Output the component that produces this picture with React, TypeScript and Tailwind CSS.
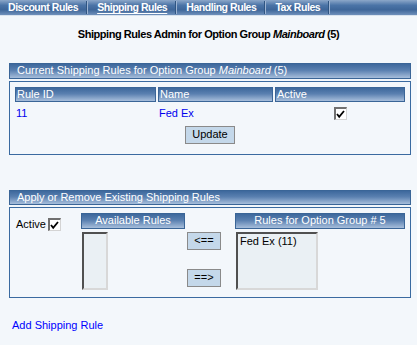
import React from "react";

const font = { fontFamily: '"Liberation Sans", Arial, sans-serif' };

function Bar({ children, className = "" }: { children?: React.ReactNode; className?: string }) {
  return (
    <div
      className={`border border-[#3a6597] bg-[linear-gradient(to_bottom,#3d689c_0%,#5a80b0_45%,#a7bedb_100%)] text-white text-[11px] leading-none flex items-center ${className}`}
    >
      {children}
    </div>
  );
}

function Check() {
  return (
    <div className="w-[13px] h-[13px] bg-white border-t-2 border-l-2 border-t-[#707070] border-l-[#707070] border-r border-b border-r-[#d4d4d4] border-b-[#d4d4d4] flex items-center justify-center">
      <svg width="9" height="9" viewBox="0 0 9 9">
        <path d="M1 4 L3.2 6.8 L8 1" stroke="#000" strokeWidth="1.8" fill="none" />
      </svg>
    </div>
  );
}

function Btn({ children, className = "" }: { children: React.ReactNode; className?: string }) {
  return (
    <div
      className={`bg-[#c4d8ea] border border-[#8a8a8a] text-black text-[11px] flex items-center justify-center ${className}`}
    >
      {children}
    </div>
  );
}

export default function App() {
  const tabs = ["Discount Rules", "Shipping Rules", "Handling Rules", "Tax Rules"];
  return (
    <div className="w-[417px] h-[345px] bg-[#f3f7fb] overflow-hidden" style={font}>
      {/* tab bar */}
      <div className="h-[16px] bg-[linear-gradient(to_bottom,#8ca7c9_0%,#4b74a7_35%,#3e6699_65%,#6f90bb_100%)] border-b border-b-[#d9e3ee] flex items-center pl-[8px]">
        {tabs.map((t, i) => (
          <div key={t} className="flex items-center h-full">
            <span
              className={`text-white font-bold text-[10.5px] leading-none tracking-[-0.45px] ${i === 1 ? "underline underline-offset-2" : ""}`}
            >
              {t}
            </span>
            <div className="ml-[8px] mr-[9px] h-[13px] w-[2px] border-l border-l-[#2f5582] border-r border-r-[#9db4d3]" />
          </div>
        ))}
      </div>

      {/* title */}
      <div className="text-center font-bold text-[11px] text-black mt-[10px] tracking-[-0.45px]">
        Shipping Rules Admin for Option Group <i>Mainboard</i> (5)
      </div>

      {/* section 1 */}
      <div className="ml-[9px] w-[402px] mt-[20px]">
        <Bar className="h-[16px] pl-[7px]">
          Current Shipping Rules for Option Group&nbsp;<i>Mainboard</i>&nbsp;(5)
        </Bar>
        <div className="mt-[2px] border border-[#3a6aa0] h-[74px] px-[5px] pt-[5px]">
          <div className="flex gap-[2px]">
            <Bar className="w-[141px] h-[15px] pl-[1px]">Rule ID</Bar>
            <Bar className="w-[115px] h-[15px] pl-[1px]">Name</Bar>
            <Bar className="w-[130px] h-[15px] pl-[1px]">Active</Bar>
          </div>
          <div className="flex items-center h-[24px] text-[11px] text-[#0000ee]">
            <span className="w-[143px] pl-[1px]">11</span>
            <span className="w-[117px] pl-[1px]">Fed Ex</span>
            <span className="w-[130px] flex justify-center">
              <Check />
            </span>
          </div>
          <div className="flex justify-center">
            <Btn className="w-[50px] h-[18px]">Update</Btn>
          </div>
        </div>
      </div>

      {/* section 2 */}
      <div className="ml-[9px] w-[402px] mt-[35px]">
        <Bar className="h-[15px] pl-[7px]">Apply or Remove Existing Shipping Rules</Bar>
        <div className="mt-[2px] border border-[#3a6aa0] h-[91px] flex pt-[5px]">
          <div className="flex items-center gap-[2px] w-[71px] pl-[6px] h-[24px] text-[11px] text-black">
            <span>Active</span>
            <Check />
          </div>
          <div className="w-[104px] flex flex-col">
            <Bar className="h-[16px] justify-center">Available Rules</Bar>
            <div className="ml-[1px] mt-[3px] w-[26px] h-[58px] bg-[#eaf0f4] border-2 border-t-[#505050] border-l-[#505050] border-r-[#d8d8d8] border-b-[#d8d8d8]" />
          </div>
          <div className="w-[50px] flex flex-col items-start pl-[2px] pt-[19px] gap-[19px]">
            <Btn className="w-[34px] h-[18px]">&lt;==</Btn>
            <Btn className="w-[34px] h-[18px]">==&gt;</Btn>
          </div>
          <div className="w-[170px] flex flex-col">
            <Bar className="h-[16px] justify-center">Rules for Option Group # 5</Bar>
            <div className="ml-[1px] mt-[3px] w-[82px] h-[58px] bg-[#eaf0f4] border-2 border-t-[#505050] border-l-[#505050] border-r-[#d8d8d8] border-b-[#d8d8d8] text-[11px] text-black pl-[2px] pt-[1px] leading-[13px]">
              Fed Ex (11)
            </div>
          </div>
        </div>
      </div>

      <div className="ml-[12px] mt-[19px] text-[11px] text-[#0000ff]">Add Shipping Rule</div>
    </div>
  );
}
